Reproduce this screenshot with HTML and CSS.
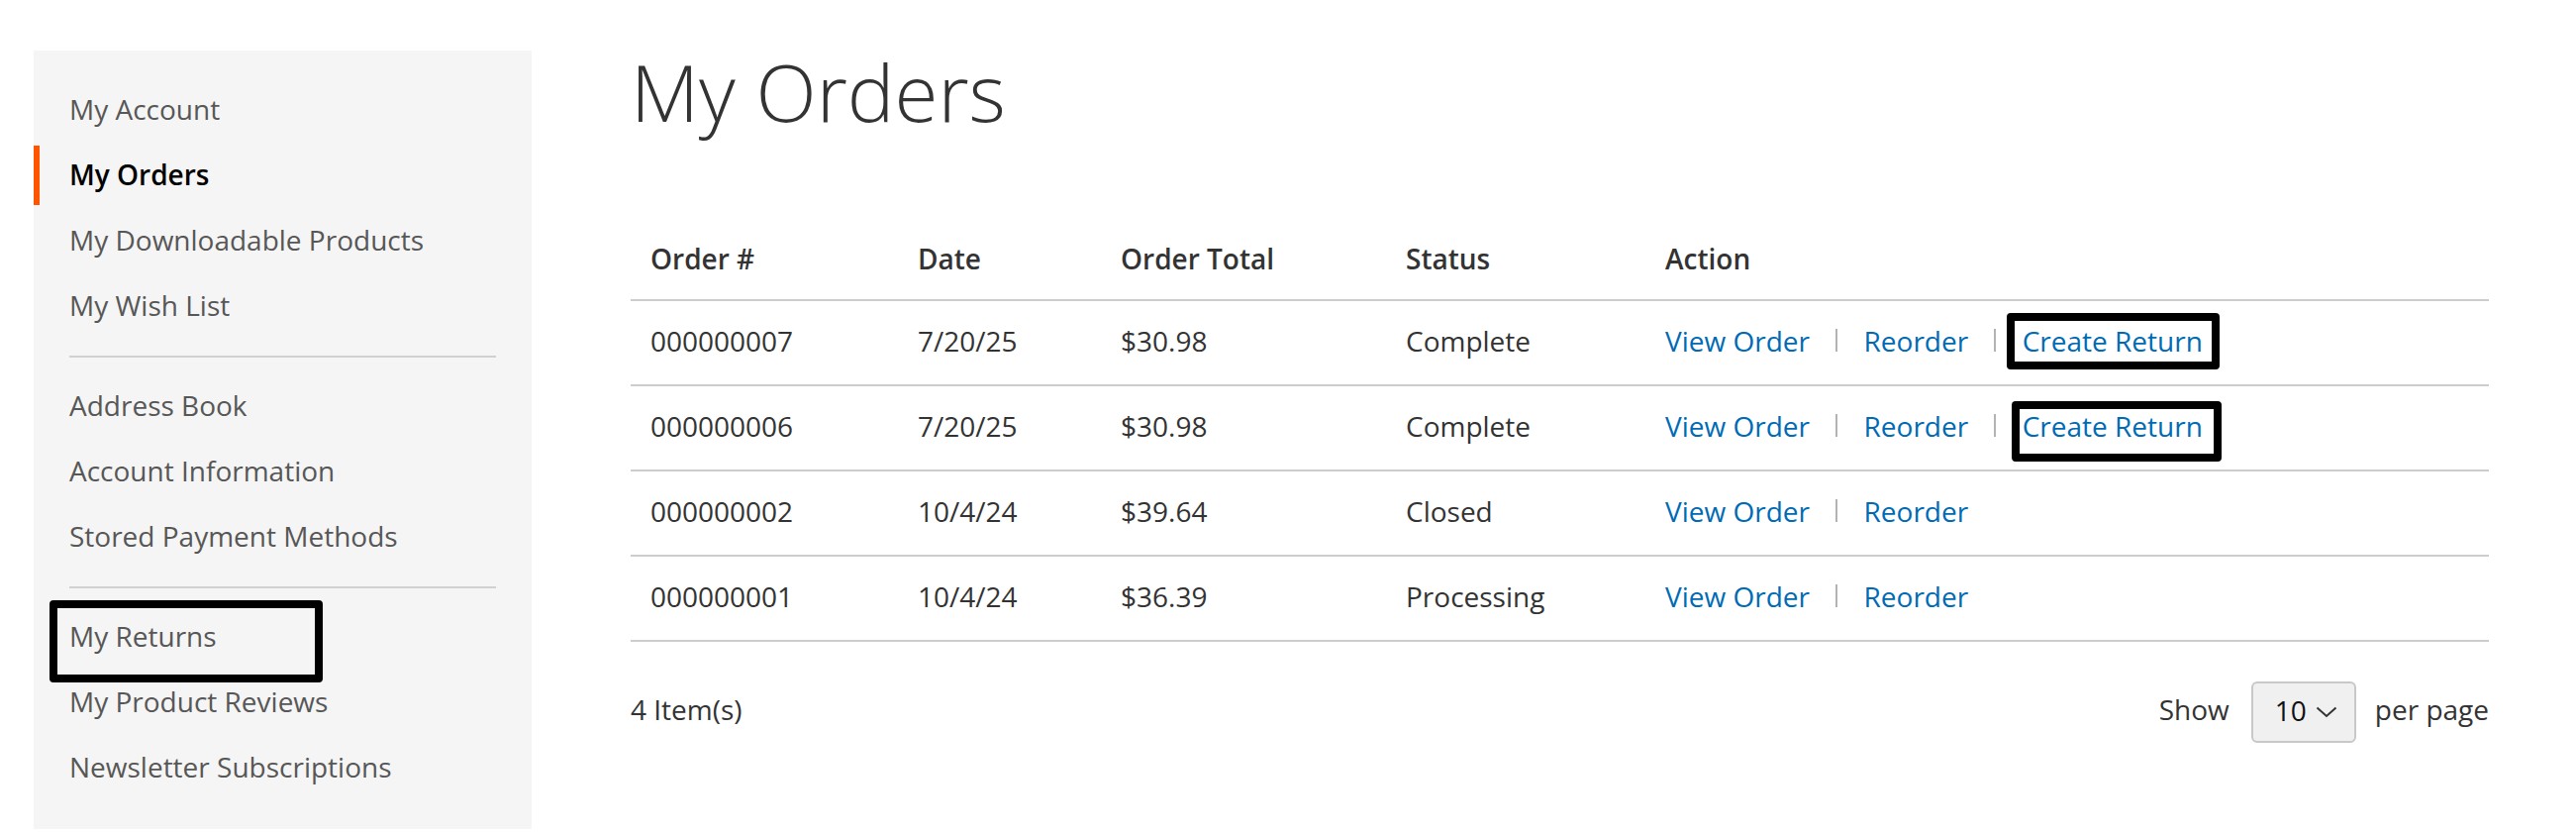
FILE: index.html
```html
<!DOCTYPE html>
<html lang="en">
<head>
<meta charset="utf-8">
<title>My Orders</title>
<link rel="stylesheet" href="styles.css">
</head>
<body>
<div class="page">
  <aside class="sidebar">
    <ul class="nav">
      <li class="item"><a class="nav-link">My Account</a></li>
      <li class="item current"><strong class="nav-link">My Orders</strong></li>
      <li class="item"><a class="nav-link">My Downloadable Products</a></li>
      <li class="item"><a class="nav-link">My Wish List</a></li>
      <li class="delimiter"></li>
      <li class="item"><a class="nav-link">Address Book</a></li>
      <li class="item"><a class="nav-link">Account Information</a></li>
      <li class="item"><a class="nav-link">Stored Payment Methods</a></li>
      <li class="delimiter"></li>
      <li class="item marked-item"><a class="nav-link">My Returns</a><span class="mark mark-nav"></span></li>
      <li class="item"><a class="nav-link">My Product Reviews</a></li>
      <li class="item"><a class="nav-link">Newsletter Subscriptions</a></li>
    </ul>
  </aside>

  <main class="main">
    <h1 class="page-title">My Orders</h1>

    <table class="orders">
      <colgroup>
        <col class="c-id"><col class="c-date"><col class="c-total"><col class="c-status"><col class="c-action">
      </colgroup>
      <thead>
        <tr><th>Order #</th><th>Date</th><th>Order Total</th><th>Status</th><th>Action</th></tr>
      </thead>
      <tbody>
        <tr>
          <td>000000007</td><td>7/20/25</td><td>$30.98</td><td>Complete</td>
          <td><a class="act">View Order</a> <span class="sep"></span> <a class="act">Reorder</a> <span class="sep"></span> <span class="marked"><a class="act">Create Return</a><span class="mark mark-r1"></span></span></td>
        </tr>
        <tr>
          <td>000000006</td><td>7/20/25</td><td>$30.98</td><td>Complete</td>
          <td><a class="act">View Order</a> <span class="sep"></span> <a class="act">Reorder</a> <span class="sep"></span> <span class="marked"><a class="act">Create Return</a><span class="mark mark-r2"></span></span></td>
        </tr>
        <tr>
          <td>000000002</td><td>10/4/24</td><td>$39.64</td><td>Closed</td>
          <td><a class="act">View Order</a> <span class="sep"></span> <a class="act">Reorder</a></td>
        </tr>
        <tr>
          <td>000000001</td><td>10/4/24</td><td>$36.39</td><td>Processing</td>
          <td><a class="act">View Order</a> <span class="sep"></span> <a class="act">Reorder</a></td>
        </tr>
      </tbody>
    </table>

    <div class="toolbar">
      <p class="amount">4 Item(s)</p>
      <div class="limiter">
        <span class="limiter-label">Show</span>
        <div class="select">
          <span class="select-value">10</span>
          <svg class="chevron" width="22" height="12" viewBox="0 0 22 12"><polyline points="1.5,1.5 11,10 20.5,1.5" fill="none" stroke="#333" stroke-width="2"/></svg>
        </div>
        <span class="limiter-text">per page</span>
      </div>
    </div>
  </main>
</div>
</body>
</html>
```

FILE: styles.css
```css
* { box-sizing: border-box; }

html, body {
  margin: 0;
  padding: 0;
  background: #fff;
}

body {
  font-family: "Open Sans", "Liberation Sans", Arial, sans-serif;
  font-size: 28px;
  line-height: 40px;
  color: #333;
}

.page {
  display: flex;
  align-items: flex-start;
  gap: 100px;
  padding: 50px 88px 0 34px;
}

/* Sidebar */
.sidebar {
  flex: none;
  width: 503px;
  margin-top: 1px;
  background: #f5f5f5;
  padding: 30px 0 32px;
}

.nav {
  list-style: none;
  margin: 0;
  padding: 0;
}

.item {
  position: relative;
}

.item + .item {
  margin-top: 6px;
}

.nav-link {
  display: block;
  padding: 9px 36px 11px 30px;
  border-left: 6px solid transparent;
  color: #575757;
  text-decoration: none;
  font-weight: 400;
}

.current .nav-link {
  border-left-color: #ff5501;
  color: #000;
  font-weight: 600;
}

.delimiter {
  height: 2px;
  margin: 20px 36px 19px;
  background: #d1d1d1;
}

/* Annotation boxes */
.mark {
  position: absolute;
  border: 8px solid #000;
  border-radius: 4px;
  pointer-events: none;
}

.mark-nav {
  left: 16px;
  top: -7px;
  width: 276px;
  height: 83px;
}

.marked {
  position: relative;
  display: inline-block;
}

.mark-r1 {
  left: -16px;
  right: -17px;
  top: -8px;
  bottom: -9px;
}

.mark-r2 {
  left: -11px;
  right: -19px;
  top: -5px;
  bottom: -16px;
}

/* Main */
.main {
  flex: none;
  width: 1877px;
}

.page-title {
  margin: 0 0 84px;
  font-size: 80px;
  line-height: 84px;
  font-weight: 300;
  color: #333;
}

.orders {
  width: 100%;
  table-layout: fixed;
  border-collapse: separate;
  border-spacing: 0;
}

.c-id { width: 270px; }
.c-date { width: 205px; }
.c-total { width: 288px; }
.c-status { width: 262px; }

.orders th {
  text-align: left;
  font-weight: 600;
  padding: 23px 20px 21px;
  border-bottom: 2px solid #cccccc;
  color: #333;
}

.orders td {
  padding: 20px 20px 24px;
  border-bottom: 2px solid #cccccc;
  white-space: nowrap;
  color: #333;
}

.act {
  color: #006bb4;
  text-decoration: none;
}

.sep {
  display: inline-block;
  width: 2px;
  height: 23px;
  margin: 0 19px;
  background: #b3b3b3;
  vertical-align: 0;
}

/* Toolbar */
.toolbar {
  display: flex;
  justify-content: space-between;
  align-items: center;
  margin-top: 40px;
}

.amount {
  margin: 0;
  padding-bottom: 6px;
}

.limiter {
  display: flex;
  align-items: center;
}

.limiter-label,
.limiter-text {
  padding-bottom: 6px;
}

.select {
  display: flex;
  align-items: center;
  width: 106px;
  height: 62px;
  margin: 0 19px 0 22px;
  padding: 0 0 4px 22px;
  border: 2px solid #c8c8c8;
  border-radius: 6px;
  background: #f0f0f0;
  color: #111;
}

.chevron {
  margin-left: 9px;
  margin-top: 4px;
}
```
